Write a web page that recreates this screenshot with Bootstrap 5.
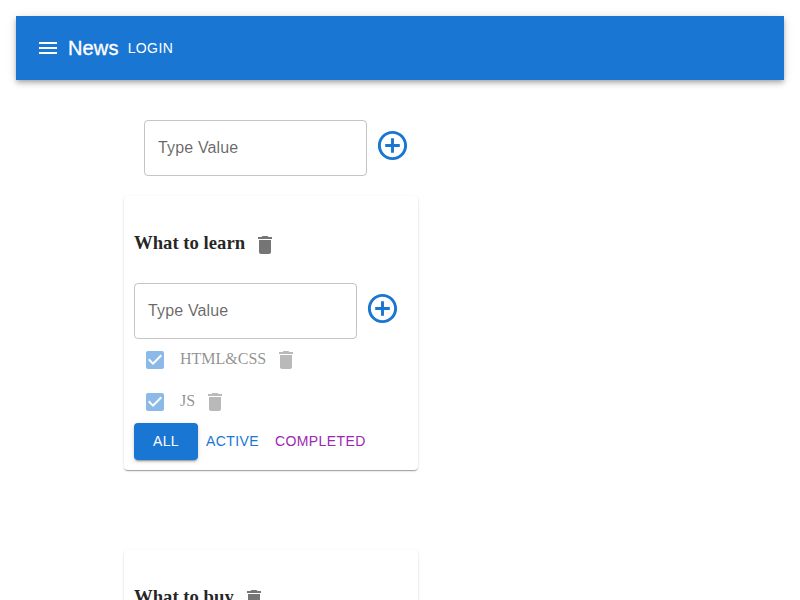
<!DOCTYPE html>
<html lang="en">
<head>
<meta charset="utf-8">
<meta name="viewport" content="width=device-width, initial-scale=1">
<title>Todolists</title>
<link href="https://cdn.jsdelivr.net/npm/bootstrap@5.3.0/dist/css/bootstrap.min.css" rel="stylesheet">
<style>
  html, body { height: 100%; }
  body { overflow: hidden; font-family: "Liberation Sans", Arial, sans-serif; background: #fff; }
  svg { display: block; flex: none; fill: currentColor; }
  .app-bar { height: 64px; background: #1976d2; padding: 0 20px;
    box-shadow: 0 2px 4px -1px rgba(0,0,0,.2), 0 4px 5px 0 rgba(0,0,0,.14), 0 1px 10px 0 rgba(0,0,0,.12); }
  .app-title { font-size: 20px; line-height: 32px; letter-spacing: .15px; font-weight: 500; margin-left: 8px; -webkit-text-stroke: .35px currentColor; }
  .text-btn { font-size: 14px; line-height: 24.5px; letter-spacing: .4px; font-weight: 500; border: 0; border-radius: 4px; padding: 6px 8px; }
  .btn-login { margin-left: 1px; }
  .page { padding: 0 24px 0 108px; }
  .add-form { height: 56px; }
  .top-form { margin: 40px 0 0 20px; }
  .value-input { width: 223px; height: 56px; border: 1px solid rgba(0,0,0,.23); border-radius: 4px; padding: 0 13px;
    font-family: "Liberation Sans", Arial, sans-serif; font-size: 16px; letter-spacing: .15px; background: transparent; box-shadow: none; }
  .value-input::placeholder { color: rgba(0,0,0,.6); opacity: 1; }
  .add-btn { color: #1976d2; margin: -5px 0 0 8px; }
  .todo-card { width: 294px; height: 274px; border: 0; border-radius: 4px; padding: 10px; margin-top: 20px;
    color: rgba(0,0,0,.87); font-family: "Liberation Serif", "Times New Roman", serif;
    box-shadow: 0 2px 1px -1px rgba(0,0,0,.2), 0 1px 1px 0 rgba(0,0,0,.14), 0 1px 3px 0 rgba(0,0,0,.12); }
  .todo-card + .todo-card { margin-top: 80px; }
  .todo-head { height: 40px; margin: 19px 0 18px; }
  .todo-head h3 { font-size: 18.72px; line-height: 22px; font-weight: 700; margin: 0 8px 5px 0; }
  .icon-grey { color: rgba(0,0,0,.54); }
  .task { height: 42px; padding-left: 9px; opacity: .5; font-size: 16px; }
  .task-name { margin: 0 8px 3px 13px; line-height: 18px; }
  .box-blue { color: #1976d2; }
  .filters { font-family: "Liberation Sans", Arial, sans-serif; }
  .btn-all { width: 64px; background: #1976d2; color: #fff;
    box-shadow: 0 3px 1px -2px rgba(0,0,0,.2), 0 2px 2px 0 rgba(0,0,0,.14), 0 1px 5px 0 rgba(0,0,0,.12); }
  .c-active { color: #1976d2; }
  .c-completed { color: #9c27b0; }
</style>
</head>
<body>
<svg class="d-none" aria-hidden="true">
  <symbol id="i-menu" viewBox="0 0 24 24"><path d="M3 18h18v-2H3v2zm0-5h18v-2H3v2zm0-7v2h18V6H3z"/></symbol>
  <symbol id="i-add" viewBox="0 0 24 24"><path d="M13 7h-2v4H7v2h4v4h2v-4h4v-2h-4V7zm-1-5C6.48 2 2 6.48 2 12s4.480 10 10 10 10-4.480 10-10S17.520 2 12 2zm0 18c-4.410 0-8-3.590-8-8s3.590-8 8-8 8 3.590 8 8-3.590 8-8 8z"/></symbol>
  <symbol id="i-delete" viewBox="0 0 24 24"><path d="M6 19c0 1.100.9 2 2 2h8c1.100 0 2-.9 2-2V7H6v12zM19 4h-3.500l-1-1h-5l-1 1H5v2h14V4z"/></symbol>
  <symbol id="i-check" viewBox="0 0 24 24"><path d="M19 3H5c-1.110 0-2 .9-2 2v14c0 1.100.89 2 2 2h14c1.110 0 2-.9 2-2V5c0-1.100-.89-2-2-2zm-9 14l-5-5 1.410-1.410L10 14.170l7.590-7.590L19 8l-9 9z"/></symbol>
</svg>

<div class="p-3">
  <header class="app-bar d-flex align-items-center text-white">
    <svg width="24" height="24"><use href="#i-menu"/></svg>
    <div class="app-title">News</div>
    <button type="button" class="btn text-btn btn-login text-white">LOGIN</button>
  </header>

  <main class="page">
    <div class="add-form top-form d-flex align-items-center">
      <input class="form-control value-input" type="text" placeholder="Type Value">
      <svg class="add-btn" width="35" height="35"><use href="#i-add"/></svg>
    </div>

    <section class="card todo-card">
      <div class="todo-head d-flex align-items-center">
        <h3>What to learn</h3>
        <svg class="icon-grey" width="24" height="24"><use href="#i-delete"/></svg>
      </div>
      <div class="add-form d-flex align-items-center">
        <input class="form-control value-input" type="text" placeholder="Type Value">
        <svg class="add-btn" width="35" height="35"><use href="#i-add"/></svg>
      </div>
      <div class="task d-flex align-items-center">
        <svg class="box-blue" width="24" height="24"><use href="#i-check"/></svg>
        <span class="task-name">HTML&amp;CSS</span>
        <svg class="icon-grey" width="24" height="24"><use href="#i-delete"/></svg>
      </div>
      <div class="task d-flex align-items-center">
        <svg class="box-blue" width="24" height="24"><use href="#i-check"/></svg>
        <span class="task-name">JS</span>
        <svg class="icon-grey" width="24" height="24"><use href="#i-delete"/></svg>
      </div>
      <div class="filters d-flex">
        <button type="button" class="btn text-btn btn-all">ALL</button>
        <button type="button" class="btn text-btn c-active">ACTIVE</button>
        <button type="button" class="btn text-btn c-completed">COMPLETED</button>
      </div>
    </section>

    <section class="card todo-card">
      <div class="todo-head d-flex align-items-center">
        <h3>What to buy</h3>
        <svg class="icon-grey" width="24" height="24"><use href="#i-delete"/></svg>
      </div>
    </section>
  </main>
</div>
<script src="https://cdn.jsdelivr.net/npm/bootstrap@5.3.0/dist/js/bootstrap.bundle.min.js"></script>
</body>
</html>
